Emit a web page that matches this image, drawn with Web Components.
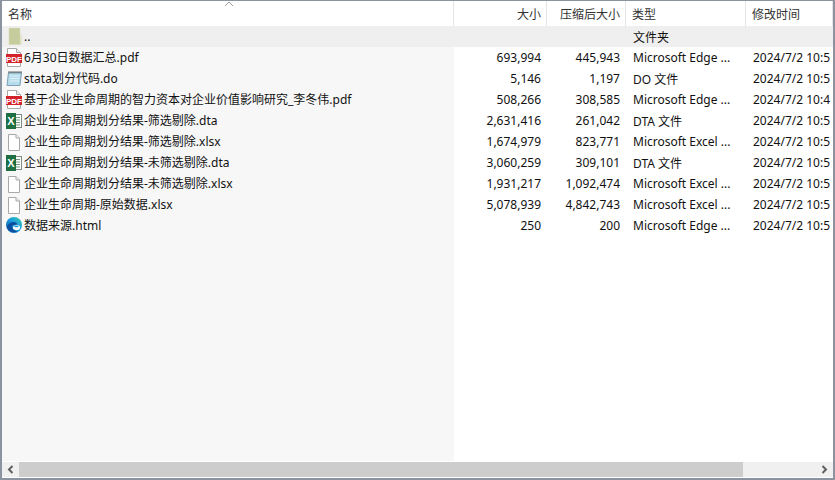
<!DOCTYPE html>
<html lang="zh">
<head>
<meta charset="utf-8">
<title>文件列表</title>
<style>
  html, body { margin: 0; height: 100%; background: #fff; }
  body { font-family: "Noto Sans", "Noto Sans CJK SC", sans-serif; overflow: hidden; }
</style>
</head>
<body>
<file-window>
  <list-header slot="header"></list-header>
  <file-row kind="folder" name=".." type="文件夹" up></file-row>
  <file-row kind="pdf" name="6月30日数据汇总.pdf" size="693,994" packed="445,943" type="Microsoft Edge ..." time="2024/7/2 10:5"></file-row>
  <file-row kind="do" name="stata划分代码.do" size="5,146" packed="1,197" type="DO 文件" time="2024/7/2 10:5"></file-row>
  <file-row kind="pdf" name="基于企业生命周期的智力资本对企业价值影响研究_李冬伟.pdf" size="508,266" packed="308,585" type="Microsoft Edge ..." time="2024/7/2 10:4"></file-row>
  <file-row kind="excel" name="企业生命周期划分结果-筛选剔除.dta" size="2,631,416" packed="261,042" type="DTA 文件" time="2024/7/2 10:5"></file-row>
  <file-row kind="blank" name="企业生命周期划分结果-筛选剔除.xlsx" size="1,674,979" packed="823,771" type="Microsoft Excel ..." time="2024/7/2 10:5"></file-row>
  <file-row kind="excel" name="企业生命周期划分结果-未筛选剔除.dta" size="3,060,259" packed="309,101" type="DTA 文件" time="2024/7/2 10:5"></file-row>
  <file-row kind="blank" name="企业生命周期划分结果-未筛选剔除.xlsx" size="1,931,217" packed="1,092,474" type="Microsoft Excel ..." time="2024/7/2 10:5"></file-row>
  <file-row kind="blank" name="企业生命周期-原始数据.xlsx" size="5,078,939" packed="4,842,743" type="Microsoft Excel ..." time="2024/7/2 10:5"></file-row>
  <file-row kind="edge" name="数据来源.html" size="250" packed="200" type="Microsoft Edge ..." time="2024/7/2 10:5"></file-row>
  <h-scrollbar slot="scroll"></h-scrollbar>
</file-window>

<script>
// 列宽：名称 / 大小 / 压缩后大小 / 类型 / 修改时间
const COLUMNS = '452px 93px 79px 120px 1fr'

const ICONS = {
  folder: `<svg width="18" height="20" viewBox="0 0 18 20">
    <path d="M4 1h11v13.500l1 1v2H4z" fill="#c6cc9c" stroke="#d4d8b4" stroke-width=".5"/>
    <path d="M15 7l2 1.500v8.500l-2 .5z" fill="#e2e5cc"/></svg>`,
  pdf: `<svg width="18" height="20" viewBox="0 0 18 20">
    <path d="M2.500 .5h9l4 4v14h-13z" fill="#fff" stroke="#a9a9a9"/>
    <path d="M11.500 .5v4h4" fill="#eee" stroke="#a9a9a9"/>
    <rect x="1" y="6" width="16" height="9" fill="#d3222a"/>
    <text x="9" y="13.500" text-anchor="middle" font-family="Liberation Sans" font-weight="700" font-size="8" fill="#fff">PDF</text></svg>`,
  do: `<svg width="18" height="20" viewBox="0 0 18 20">
    <path d="M3.500 3.500h13l-1.500 13h-13z" fill="#b4dcec" stroke="#7f9fb5"/>
    <path d="M5 7h9.500M4.800 9.500h9.500M4.600 12h9.500" stroke="#e4f3f9"/>
    <path d="M4 2v2.500M6 2v2.500M8 2v2.500M10 2v2.500M12 2v2.500M14 2v2.500M16 2v2.500" stroke="#666"/></svg>`,
  excel: `<svg width="18" height="20" viewBox="0 0 18 20">
    <rect x="8.500" y="3.500" width="8" height="13" fill="#fff" stroke="#7d8f84"/>
    <path d="M11 6.500h4M11 9h4M11 11.500h4M11 14h4" stroke="#6f9a80"/>
    <rect x="1" y="2" width="10" height="16" fill="#1e6f42"/>
    <text x="6" y="14" text-anchor="middle" font-family="Liberation Sans" font-weight="700" font-size="11" fill="#fff">X</text></svg>`,
  blank: `<svg width="18" height="20" viewBox="0 0 18 20">
    <path d="M3.500 2.500h7.500l3.500 3.500v12.500h-11z" fill="#fff" stroke="#a8a8a8"/>
    <path d="M11 2.500v3.500h3.500" fill="#f0f0f0" stroke="#a8a8a8"/></svg>`,
  edge: `<svg width="18" height="20" viewBox="0 0 18 20">
    <defs><linearGradient id="eg" x1="0" y1="1" x2="1" y2="0">
      <stop offset="0" stop-color="#0b4f9e"/><stop offset=".55" stop-color="#1b9de2"/><stop offset="1" stop-color="#39c9a0"/>
    </linearGradient></defs>
    <circle cx="9" cy="9" r="8" fill="url(#eg)"/>
    <path d="M2 11c1-3.500 4-5 6.500-5 2.500 0 4 1.500 4 3.500H7c-.5 3 2 5.500 5.500 5.500-3.500 2.500-9 1-10.500-4z" fill="#0b4f9e"/>
    <ellipse cx="11.500" cy="11.500" rx="3.500" ry="2.800" fill="#fff"/>
    <path d="M8 9.500h5.500c.5 1-.5 1.800-2 1.800-1.500 0-3-.6-3.500-1.800z" fill="#1b9de2"/></svg>`
}

class FileWindow extends HTMLElement {
  constructor() {
    super()
    this.attachShadow({ mode: 'open' })
    this.shadowRoot.innerHTML = `
      <style>
        :host {
          display: flex;
          flex-direction: column;
          width: 835px;
          height: 480px;
          box-sizing: border-box;
          border: 2px solid #8b93a1;
          border-top-width: 1px;
          background: #fff;
          color: #111;
          font-size: 12px;
          overflow: hidden;
        }
        .list {
          flex: 1;
          min-height: 0;
          background: linear-gradient(to right, #f7f7f7 452px, #fff 452px);
        }
      </style>
      <slot name="header"></slot>
      <div class="list"><slot></slot></div>
      <slot name="scroll"></slot>`
  }
}

class ListHeader extends HTMLElement {
  constructor() {
    super()
    this.attachShadow({ mode: 'open' })
    this.shadowRoot.innerHTML = `
      <style>
        :host {
          display: grid;
          grid-template-columns: ${COLUMNS};
          height: 25px;
          position: relative;
          color: #333;
          background: #fff;
        }
        .col {
          display: flex;
          align-items: center;
          padding: 0 5px 0 6px;
          border-right: 1px solid #e5e5e5;
          white-space: nowrap;
          overflow: hidden;
        }
        .right { justify-content: flex-end; }
        .col:last-child { border-right: 0; }
        .sort { position: absolute; left: 222px; top: 0; }
      </style>
      <div class="col">名称</div>
      <div class="col right">大小</div>
      <div class="col right">压缩后大小</div>
      <div class="col">类型</div>
      <div class="col">修改时间</div>
      <svg class="sort" width="10" height="6" viewBox="0 0 10 6">
        <path d="M1 5l4-4 4 4" fill="none" stroke="#9a9a9a"/>
      </svg>`
  }
}

class FileRow extends HTMLElement {
  constructor() {
    super()
    this.attachShadow({ mode: 'open' })
  }

  connectedCallback() {
    const a = n => this.getAttribute(n) || ''
    this.shadowRoot.innerHTML = `
      <style>
        :host {
          display: grid;
          grid-template-columns: ${COLUMNS};
          height: 21px;
          align-items: center;
          white-space: nowrap;
        }
        :host([up]) { background: #efefef; }
        .name { display: flex; align-items: center; gap: 1px; padding-left: 3px; overflow: hidden; }
        .name svg { flex: none; display: block; }
        .name span { line-height: 16px; }
        .num { text-align: right; padding-right: 6px; }
        .type { padding-left: 7px; overflow: hidden; }
        .time { padding-left: 7px; overflow: hidden; }
      </style>
      <div class="name">${ICONS[a('kind')] || ''}<span>${a('name')}</span></div>
      <div class="num">${a('size')}</div>
      <div class="num">${a('packed')}</div>
      <div class="type">${a('type')}</div>
      <div class="time">${a('time')}</div>`
  }
}

class HScrollbar extends HTMLElement {
  constructor() {
    super()
    this.attachShadow({ mode: 'open' })
    this.shadowRoot.innerHTML = `
      <style>
        :host {
          display: flex;
          height: 15px;
          margin: 1px 0;
          background: #f0f0f0;
        }
        .btn { flex: none; width: 17px; display: flex; align-items: center; justify-content: center; }
        .track { flex: 1; display: flex; }
        .thumb { width: 724px; background: #cdcdcd; }
      </style>
      <div class="btn"><svg width="7" height="9" viewBox="0 0 7 9"><path d="M5.500 1L2 4.500 5.500 8" fill="none" stroke="#606060" stroke-width="2"/></svg></div>
      <div class="track"><div class="thumb"></div></div>
      <div class="btn"><svg width="7" height="9" viewBox="0 0 7 9"><path d="M1.500 1L5 4.500 1.500 8" fill="none" stroke="#606060" stroke-width="2"/></svg></div>`
  }
}

customElements.define('file-window', FileWindow)
customElements.define('list-header', ListHeader)
customElements.define('file-row', FileRow)
customElements.define('h-scrollbar', HScrollbar)
</script>
</body>
</html>
